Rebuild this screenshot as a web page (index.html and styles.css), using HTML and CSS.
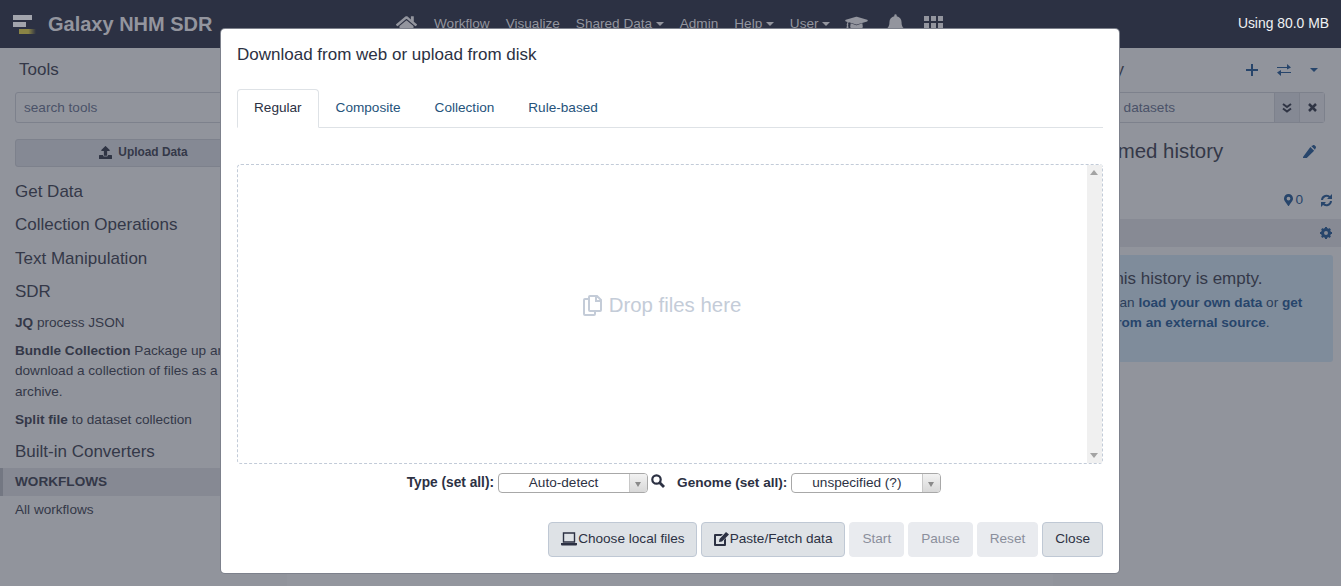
FILE: index.html
```html
<!DOCTYPE html>
<html lang="en">
<head>
<meta charset="utf-8">
<title>Galaxy NHM SDR</title>
<link rel="stylesheet" href="styles.css">
</head>
<body>
<header class="navbar">
  <div class="brand">
    <svg class="logo" width="28" height="24" viewBox="0 0 28 24"><defs><linearGradient id="fade"><stop offset="0.550" stop-color="#8a8445"/><stop offset="1" stop-color="#8a8445" stop-opacity="0"/></linearGradient></defs><rect x="1" y="3" width="19" height="5" fill="#a2a4ac"/><rect x="1" y="10" width="13" height="5" fill="#a2a4ac"/><rect x="7" y="17" width="17" height="5" fill="url(#fade)"/></svg>
    <span class="brand-name">Galaxy NHM SDR</span>
  </div>
  <nav class="nav">
    <svg class="nav-icon home" width="21" height="19" viewBox="0 0 576 512"><path fill="#93959e" d="M280 148 96 300v164c0 9 7 16 16 16l112-.3c9 0 16-7 16-16V368c0-9 7-16 16-16h64c9 0 16 7 16 16v95.600c0 9 7 16 16 16l112 .4c9 0 16-7 16-16V300L296 148c-4-3-12-3-16 0zM572 251l-84-69V44c0-7-5-12-12-12h-56c-7 0-12 5-12 12v72L318 39c-18-15-43-15-61 0L4 251c-5 4-6 12-2 17l26 31c4 5 12 6 17 2L280 107c4-3 12-3 16 0l235 194c5 4 13 3 17-2l26-31c4-5 3-13-2-17z"/></svg>
    <a class="nav-link">Workflow</a>
    <a class="nav-link">Visualize</a>
    <a class="nav-link caret">Shared Data</a>
    <a class="nav-link">Admin</a>
    <a class="nav-link caret">Help</a>
    <a class="nav-link caret">User</a>
    <svg class="nav-icon cap" width="23" height="18" viewBox="0 0 640 512"><path fill="#93959e" d="M623 137 332 48c-8-2-16-2-24 0L17 137c-23 7-23 38 0 45l51 16c-11 14-18 31-19 50-6 3-10 10-10 17 0 7 4 13 9 17L31 408c-2 8 4 16 12 16h42c8 0 14-8 12-16L80 282c6-4 10-10 10-17 0-7-4-13-9-16 1-17 9-31 23-40l204 63c9 3 20 5 24 0l291-89c23-7 23-38 0-46zM342 283c-28 9-52 4-44 0L153 238l-13 104c0 35 81 64 180 64s180-29 180-64l-13-104z"/></svg>
    <svg class="nav-icon bell" width="17" height="20" viewBox="0 0 448 512"><path fill="#93959e" d="M224 512c35 0 64-29 64-64H160c0 35 29 64 64 64zm215-150c-19-21-55-52-55-154 0-78-54-140-128-155V32a32 32 0 1 0-64 0v21C118 68 64 130 64 208c0 102-36 133-55 154-6 6-9 14-9 22 0 16 13 32 32 32h384c19 0 32-16 32-32 0-8-3-16-9-22z"/></svg>
    <svg class="nav-icon grid" width="19" height="19" viewBox="0 0 19 19"><path fill="#93959e" d="M0 0h5v5H0zM7 0h5v5H7zM14 0h5v5h-5zM0 7h5v5H0zM7 7h5v5H7zM14 7h5v5h-5zM0 14h5v5H0zM7 14h5v5H7zM14 14h5v5h-5z"/></svg>
  </nav>
  <div class="quota">Using 80.0 MB</div>
</header>

<div class="panels">
  <aside class="left-panel">
    <h4 class="panel-title">Tools</h4>
    <div class="search-box">search tools</div>
    <div class="upload-btn">
      <svg width="13" height="13" viewBox="0 0 512 512"><path fill="#2f3444" d="M296 384h-80c-13 0-24-11-24-24V192h-88c-18 0-27-22-14-34L242 6c8-8 20-8 28 0l152 152c13 12 4 34-14 34h-88v168c0 13-11 24-24 24zm216-8v112c0 13-11 24-24 24H24c-13 0-24-11-24-24V376c0-13 11-24 24-24h136v8c0 31 25 56 56 56h80c31 0 56-25 56-56v-8h136c13 0 24 11 24 24z"/></svg>
      <span>Upload Data</span>
    </div>
    <div class="tool-section first">Get Data</div>
    <div class="tool-section">Collection Operations</div>
    <div class="tool-section">Text Manipulation</div>
    <div class="tool-section">SDR</div>
    <div class="tool"><b>JQ</b> process JSON</div>
    <div class="tool wrap"><b>Bundle Collection</b> Package up and download a collection of files as a archive.</div>
    <div class="tool"><b>Split file</b> to dataset collection</div>
    <div class="tool-section last">Built-in Converters</div>
    <div class="section-head">WORKFLOWS</div>
    <div class="tool all">All workflows</div>
  </aside>
  <main class="center-panel"></main>
  <aside class="right-panel">
    <div class="history-top">
      <h4 class="panel-title history-title">History</h4>
      <div class="history-actions">
        <svg width="12" height="12" viewBox="0 0 12 12"><path fill="#27456b" d="M5 0h2v5h5v2H7v5H5V7H0V5h5z"/></svg>
        <svg width="14" height="12" viewBox="0 0 14 12"><path fill="#27456b" d="M0 3h10V0l4 3.500-4 2V4H0zM14 8H4V6L0 8.500 4 12V9h10z"/></svg>
        <svg width="8" height="4" viewBox="0 0 8 4"><path fill="#27456b" d="M0 0h8L4 4z"/></svg>
      </div>
    </div>
    <div class="search-group">
      <div class="search-input">search datasets</div>
      <div class="search-btn"><svg width="10" height="10" viewBox="0 0 10 10"><path fill="none" stroke="#2f3444" stroke-width="2" d="M1 1l4 3 4-3M1 5.500l4 3 4-3"/></svg></div>
      <div class="search-btn"><svg width="9" height="9" viewBox="0 0 9 9"><path stroke="#2f3444" stroke-width="2.500" d="M1 1l7 7M8 1L1 8"/></svg></div>
    </div>
    <div class="history-name">
      <span>Unnamed history</span>
      <svg width="13" height="13" viewBox="0 0 512 512"><path fill="#27456b" d="M290 74l148 148L116 544 0 512l-32 0zM497 52l-37-37c-20-20-52-20-72 0l-65 27 148 148 26-66c20-20 20-52 0-72z"/></svg>
    </div>
    <div class="history-stats">
      <svg width="9" height="12" viewBox="0 0 384 512"><path fill="#27456b" d="M172 502C27 291 0 272 0 192 0 86 86 0 192 0s192 86 192 192c0 80-27 99-172 310a24 24 0 0 1-40 0zm20-230a80 80 0 1 0 0-160 80 80 0 0 0 0 160z"/></svg>
      <span class="count">0</span>
      <svg class="refresh" width="13" height="13" viewBox="0 0 13 13"><path fill="none" stroke="#27456b" stroke-width="2" d="M2 6a4.500 4.500 0 0 1 8-2.500M11 7a4.500 4.500 0 0 1-8 2.500"/><path fill="#27456b" d="M12 0v5H7zM1 13V8h5z"/></svg>
    </div>
    <div class="history-bar"><svg width="12" height="12" viewBox="0 0 12 12"><circle cx="6" cy="6" r="3.500" fill="none" stroke="#27456b" stroke-width="3"/><path stroke="#27456b" stroke-width="2" d="M6 0v2M6 10v2M0 6h2M10 6h2M1.800 1.800l1.400 1.400M8.800 8.800l1.400 1.400M1.800 10.200l1.400-1.400M8.800 3.200l1.400-1.400"/></svg></div>
    <div class="empty-alert">
      <div class="empty-title">This history is empty.</div>
      <div class="empty-text">
        <div class="empty-line first-line">You can <b>load your own data</b> or <b>get</b></div>
        <div class="empty-line"><b>data from an external source</b>.</div>
      </div>
    </div>
  </aside>
</div>

<div class="modal" role="dialog">
  <h5 class="modal-title">Download from web or upload from disk</h5>
  <ul class="tabs">
    <li class="tab active">Regular</li>
    <li class="tab">Composite</li>
    <li class="tab">Collection</li>
    <li class="tab">Rule-based</li>
  </ul>
  <div class="drop-area">
    <div class="drop-center">
      <svg width="19" height="21" viewBox="0 0 19 21"><path fill="none" stroke="#c4ccd8" stroke-width="2" d="M6 4V2a1 1 0 0 1 1-1h7l4 4v10a1 1 0 0 1-1 1H7a1 1 0 0 1-1-1V4H2a1 1 0 0 0-1 1v14a1 1 0 0 0 1 1h9a1 1 0 0 0 1-1v-3M13 1v5h5"/></svg>
      <span>Drop files here</span>
    </div>
    <div class="scrollbar"><i class="arrow up"></i><i class="arrow down"></i></div>
  </div>
  <div class="settings">
    <b class="set-label">Type (set all):</b>
    <div class="select type-select"><span>Auto-detect</span><i class="select-arrow"></i></div>
    <svg class="search-icon" width="14" height="14" viewBox="0 0 14 14"><circle cx="5.500" cy="5.500" r="4.200" fill="none" stroke="#2c3143" stroke-width="2.200"/><path stroke="#2c3143" stroke-width="2.800" d="M8.500 8.500l4.500 4.500"/></svg>
    <b class="set-label genome">Genome (set all):</b>
    <div class="select genome-select"><span>unspecified (?)</span><i class="select-arrow"></i></div>
  </div>
  <div class="footer">
    <button class="btn btn-local">
      <svg width="16" height="14" viewBox="0 0 16 14"><path fill="none" stroke="#2c3143" stroke-width="1.400" d="M2.500 1h11v9h-11z"/><path fill="#2c3143" d="M0 11h16v1.500a1 1 0 0 1-1 1H1a1 1 0 0 1-1-1z"/></svg>Choose local files</button>
    <button class="btn">
      <svg width="15" height="14" viewBox="0 0 15 14"><path fill="#2c3143" d="M2 2h7L7 4H2v8h8V8l2-2v7a1 1 0 0 1-1 1H1a1 1 0 0 1-1-1V3a1 1 0 0 1 1-1zM12 0l3 2.500L8 9.500 5 10l.5-3z"/></svg>Paste/Fetch data</button>
    <button class="btn off">Start</button>
    <button class="btn off">Pause</button>
    <button class="btn off">Reset</button>
    <button class="btn">Close</button>
  </div>
</div>
</body>
</html>
```
FILE: styles.css
```css
* { box-sizing: border-box; }
html, body { height: 100%; }
body {
  margin: 0;
  height: 586px;
  overflow: hidden;
  background: #92959d;
  color: #343848;
  font-family: "Liberation Sans", Arial, sans-serif;
  font-size: 13.600px;
  line-height: 20.400px;
}

.navbar {
  display: flex;
  align-items: center;
  height: 48px;
  background: #2c3143;
  color: #93959e;
}
.brand { display: flex; align-items: center; width: 396px; padding-left: 12px; }
.logo { flex: none; margin-right: 8px; }
.brand-name { font-size: 20px; font-weight: 700; color: #93959e; }
.nav { display: flex; align-items: center; flex: 1; }
.nav-icon { flex: none; }
.home { margin-right: 17px; }
.cap { margin: 0 19px 0 -1px; }
.bell { margin-right: 20px; }
.grid { margin-top: 3px; }
.nav-link { margin-right: 16px; white-space: nowrap; font-size: 13.600px; }
.caret::after {
  content: "";
  display: inline-block;
  margin-left: 3.600px;
  vertical-align: 2px;
  border-top: 4px solid #93959e;
  border-left: 4px solid transparent;
  border-right: 4px solid transparent;
}
.quota { padding: 0 12px 1px 0; color: #f0f1f3; font-size: 13.900px; white-space: nowrap; }

.panels { display: flex; height: 538px; }
.left-panel { width: 287px; flex: none; padding: 0 0 0 15px; overflow: hidden; background: #91949c; }
.center-panel { flex: 1; background: #93969e; }
.right-panel { width: 288px; flex: none; padding: 0 16px 0 15px; background: #91949c; }

.panel-title { margin: 0; padding-left: 4px; height: 44px; font-size: 17px; font-weight: 400; line-height: 43px; }
.search-box {
  height: 31px;
  width: 260px;
  padding: 5px 8px;
  border: 1px solid #7d818c;
  border-radius: 3px;
  color: #4a5268;
}
.upload-btn {
  display: flex;
  justify-content: center;
  align-items: center;
  gap: 6px;
  width: 260px;
  height: 28px;
  margin-top: 16px;
  padding: 0 3px 2px 0;
  background: #858994;
  border: 1px solid #7d818c;
  border-radius: 3px;
  font-size: 11.900px;
  font-weight: 700;
}
.tool-section { height: 33.400px; font-size: 17px; line-height: 33.400px; white-space: nowrap; }
.tool-section.first { margin-top: 8px; }
.tool-section.last { margin-top: -3px; }
.tool { margin-bottom: 7.800px; white-space: nowrap; }
.tool-section + .tool { margin-top: 4px; }
.tool.wrap { width: 245px; white-space: normal; }
.section-head {
  display: flex;
  align-items: center;
  height: 28px;
  margin: 0 0 0 -15px;
  padding-left: 12px;
  background: #868993;
  border-left: 3px solid #737782;
  font-weight: 700;
}
.tool.all { margin-top: 4px; }

.history-top { display: flex; justify-content: space-between; align-items: center; height: 44px; }
.history-title { padding-left: 3px; }
.history-actions { display: flex; align-items: center; gap: 19px; padding-right: 7px; margin-top: -1px; }
.search-group { display: flex; height: 31px; border: 1px solid #7d818c; border-radius: 3px; color: #4a5268; }
.search-input { flex: 1; padding: 5px 10px; }
.search-btn { display: flex; align-items: center; justify-content: center; width: 25px; background: #858994; border-left: 1px solid #7d818c; }
.search-btn:last-child { background: #8b8e98; }
.history-name { display: flex; justify-content: space-between; align-items: center; height: 27px; margin-top: 15px; padding-left: 1px; font-size: 20.400px; }
.history-name svg { margin-right: 9px; }
.history-stats { display: flex; justify-content: flex-end; align-items: center; gap: 2px; height: 20px; margin: 25px -8px 0 0; color: #27456b; }
.refresh { margin-left: 15px; }
.history-bar {
  display: flex;
  justify-content: flex-end;
  align-items: center;
  height: 28px;
  margin: 9px -16px 0 -15px;
  padding: 0 9px 0 0;
  background: #878a94;
}
.empty-alert {
  height: 107px;
  margin: 8px -8px 0 0;
  padding: 13px 12px;
  background: #7f8c9b;
  border-radius: 3px;
  color: #2c3e5a;
}
.empty-title { margin-left: 24px; font-size: 17px; line-height: 22px; color: #343848; }
.empty-text { margin-top: 3px; }
.empty-text b { color: #27456b; }
.first-line { padding-left: 6px; }

.modal {
  position: absolute;
  left: 221px;
  top: 29px;
  display: flex;
  flex-direction: column;
  width: 898px;
  height: 544px;
  padding: 0 16px;
  background: #fff;
  border-radius: 4px;
  box-shadow: 0 0 0 1px #7d818c;
  color: #2c3143;
}
.modal-title { margin: 16px 0 0; font-size: 17px; font-weight: 400; line-height: 20px; }
.tabs {
  display: flex;
  height: 39px;
  margin: 24px 0 0;
  padding: 0;
  list-style: none;
  border-bottom: 1px solid #dee2e6;
}
.tab { padding: 8px 17px; height: 39px; line-height: 21px; color: #25537b; }
.tab.active {
  padding: 7px 16px;
  color: #2c3143;
  background: #fff;
  border: 1px solid #dee2e6;
  border-bottom-color: #fff;
  border-radius: 4px 4px 0 0;
}
.drop-area {
  position: relative;
  display: flex;
  align-items: center;
  justify-content: center;
  height: 300px;
  margin-top: 36px;
  padding: 0 16px 18px 0;
  border: 1px dashed #c2cbd8;
  border-radius: 4px;
}
.drop-center { display: flex; align-items: center; gap: 7px; font-size: 20.400px; color: #c4ccd8; }
.scrollbar {
  position: absolute;
  top: 0;
  right: 0;
  bottom: 0;
  width: 15px;
  background: #f0f0f0;
}
.arrow { position: absolute; left: 3px; border-left: 4px solid transparent; border-right: 4px solid transparent; }
.arrow.up { top: 5px; border-bottom: 5px solid #a3a3a3; }
.arrow.down { bottom: 5px; border-top: 5px solid #a3a3a3; }

.settings { display: flex; align-items: center; justify-content: center; height: 20px; margin-top: 9px; padding-left: 8px; }
.set-label { font-size: 13.720px; font-weight: 700; }
.set-label.genome { margin-left: 12px; font-size: 13.600px; }
.select {
  position: relative;
  height: 20px;
  margin-left: 4px;
  padding-right: 19px;
  border: 1px solid #a8a8a8;
  border-radius: 4px;
  text-align: center;
  line-height: 18px;
  font-size: 13.600px;
}
.select span { display: block; }
.type-select { width: 150px; }
.genome-select { width: 150px; }
.select-arrow {
  position: absolute;
  top: 0;
  right: 0;
  bottom: 0;
  width: 18px;
  background: linear-gradient(#f2f2f2, #d8d8d8);
  border-left: 1px solid #c8c8c8;
  border-radius: 0 3px 3px 0;
}
.select-arrow::after {
  content: "";
  position: absolute;
  left: 5px;
  top: 8px;
  border-top: 5px solid #8a8a8a;
  border-left: 3px solid transparent;
  border-right: 3px solid transparent;
}
.search-icon { margin: -4px 0 0 3px; flex: none; }

.footer { display: flex; justify-content: flex-end; gap: 4px; margin-top: 29px; }
.btn {
  display: flex;
  align-items: center;
  justify-content: center;
  height: 35px;
  padding: 0 12px 2px;
  background: #dee2e6;
  border: 1px solid #bfc8d4;
  border-radius: 4px;
  color: #2c3143;
  font-family: inherit;
  font-size: 13.600px;
}
.btn svg { margin-right: 1px; }
.btn-local { padding-right: 11px; }
.btn.off { background: #e9ebef; border-color: #e9ebef; color: #8b8f9c; }
```
